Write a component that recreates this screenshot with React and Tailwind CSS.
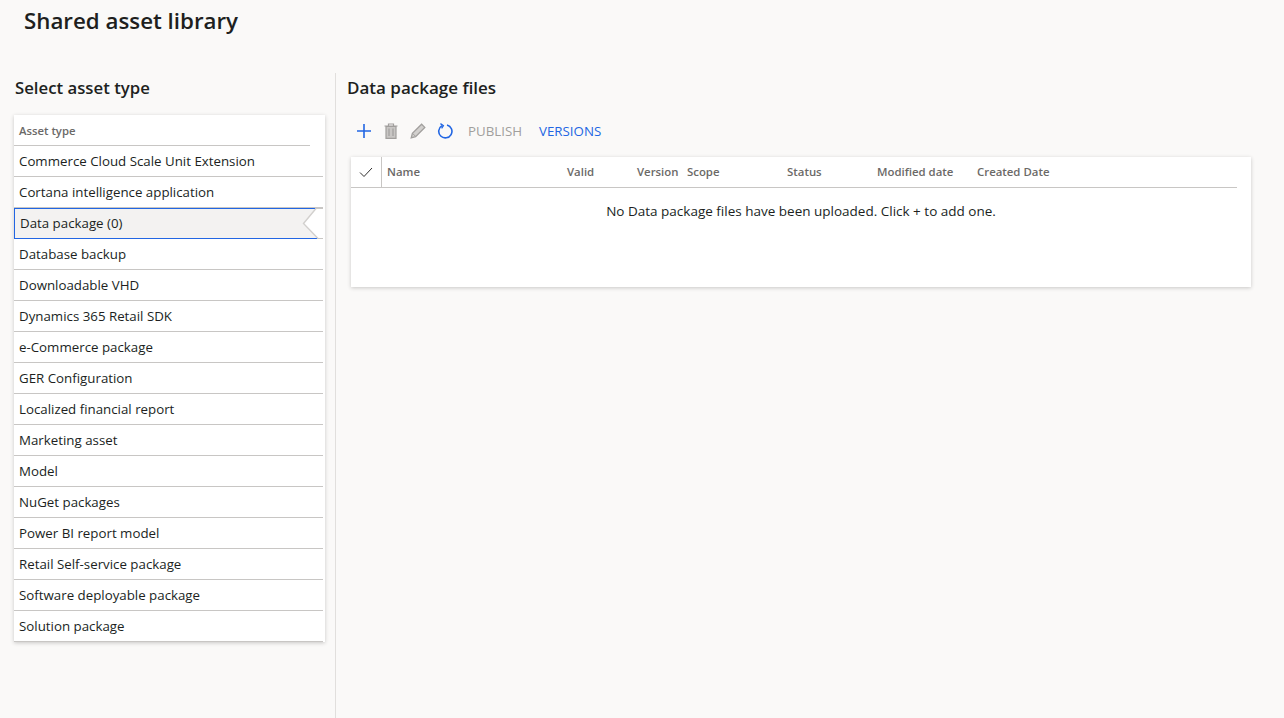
const ASSET_TYPES = [
  'Commerce Cloud Scale Unit Extension',
  'Cortana intelligence application',
  'Data package (0)',
  'Database backup',
  'Downloadable VHD',
  'Dynamics 365 Retail SDK',
  'e-Commerce package',
  'GER Configuration',
  'Localized financial report',
  'Marketing asset',
  'Model',
  'NuGet packages',
  'Power BI report model',
  'Retail Self-service package',
  'Software deployable package',
  'Solution package',
]

const COLUMNS = [
  { label: 'Name', width: 'w-[180px]' },
  { label: 'Valid', width: 'w-[70px]' },
  { label: 'Version', width: 'w-[50px]' },
  { label: 'Scope', width: 'w-[100px]' },
  { label: 'Status', width: 'w-[90px]' },
  { label: 'Modified date', width: 'w-[100px]' },
  { label: 'Created Date', width: 'w-[100px]' },
]

function AssetRow({ label, selected }) {
  if (selected) {
    return (
      <div className="relative w-[309px] h-[31px] flex items-center pl-[5px] bg-[#f3f2f1] border border-[#2266e3] border-r-0 text-[13.3px] text-[#201f1e]">
        {label}
        {/* notch pointing at the details pane */}
        <svg className="absolute right-0 top-[-1px]" width="21" height="31" viewBox="0 0 21 31">
          <path d="M14 0 H21 V31 H16 L1.5 15.5 Z" fill="#ffffff" />
          <path d="M14 0.5 H21 M16 30.5 H21" fill="none" stroke="#c8c6c4" />
          <path d="M14 0.5 L1.5 15.5 L16 30.5" fill="none" stroke="#d2d0ce" strokeWidth="1.4" />
        </svg>
      </div>
    )
  }
  return (
    <div className="w-[309px] h-[31px] flex items-center pl-[5px] pt-[2px] border-b border-[#c8c6c4] text-[13.3px] text-[#201f1e]">
      {label}
    </div>
  )
}

function Toolbar() {
  return (
    <div className="flex items-center h-[30px] ml-[9px] mt-[14px]">
      <svg width="16" height="16" viewBox="0 0 16 16">
        <path d="M8 1v14M1 8h14" stroke="#2266e3" strokeWidth="1.6" fill="none" />
      </svg>
      <svg width="14" height="16" viewBox="0 0 14 16" className="ml-[12px]">
        <path d="M0.5 3h13M4.5 3V1h5v2" stroke="#a19f9d" strokeWidth="1.2" fill="none" />
        <path d="M2 3.5h10V15.3H2z" fill="#c8c6c4" stroke="#a19f9d" strokeWidth="1.2" />
        <path d="M5 5.5v7.5M9 5.5v7.5" stroke="#a19f9d" strokeWidth="1.2" />
      </svg>
      <svg width="16" height="16" viewBox="0 0 16 16" className="ml-[12px]">
        <path d="M1.2 14.8l1.2-4.4L11.6 1.2l3.2 3.2-9.2 9.2z" fill="#d2d0ce" stroke="#a19f9d" strokeWidth="1.3" />
        <path d="M2.8 10.6l2.6 2.6" stroke="#a19f9d" strokeWidth="1" />
      </svg>
      <svg width="16" height="16" viewBox="0 0 16 16" className="ml-[11px]">
        <path d="M5 2.6A6.6 6.6 0 1 0 10 1.9" fill="none" stroke="#2266e3" strokeWidth="1.6" />
        <path d="M3.4 0.6L6.4 2.6 4.6 5.4" fill="none" stroke="#2266e3" strokeWidth="1.3" />
      </svg>
      <span className="ml-[15px] pt-[2px] text-[13.3px] text-[#a19f9d]">PUBLISH</span>
      <span className="ml-[17px] pt-[2px] text-[13.3px] text-[#2266e3]">VERSIONS</span>
    </div>
  )
}

export default function App() {
  return (
    <div
      className="w-[1284px] h-[718px] overflow-hidden flex flex-col bg-[#faf9f8] text-[#201f1e]"
      style={{ fontFamily: '"Open Sans", "Noto Sans", sans-serif' }}
    >
      <h1 className="h-[73px] pl-[24px] pt-[5px] text-[22.3px] leading-[32px] font-semibold">Shared asset library</h1>

      <div className="flex flex-1 min-h-0">
        {/* Asset type column */}
        <div className="w-[336px] shrink-0 pl-[14px] border-r border-[#e1dfdd]">
          <h2 className="h-[42px] pl-px pt-[2px] text-[16.75px] leading-[26px] font-semibold">Select asset type</h2>
          <div className="w-[311px] bg-white shadow-[0_1px_4px_rgba(0,0,0,0.2)]">
            <div className="h-[31px] w-[296px] flex items-center pl-[5px] pt-[2px] border-b border-[#c8c6c4] text-[11.3px] font-semibold text-[#6b6967]">
              Asset type
            </div>
            {ASSET_TYPES.map((label) => (
              <AssetRow key={label} label={label} selected={label === 'Data package (0)'} />
            ))}
          </div>
        </div>

        {/* Files pane */}
        <div className="flex-1 pl-[11px]">
          <h2 className="h-[29px] text-[17px] leading-[30px] font-semibold">Data package files</h2>
          <Toolbar />
          <div className="ml-[4px] mt-[11px] w-[900px] h-[130px] bg-white shadow-[0_1px_4px_rgba(0,0,0,0.2)]">
            <div className="w-[886px] h-[31px] flex items-center border-b border-[#c8c6c4] text-[11.4px] font-semibold text-[#6b6967]">
              <div className="w-[31px] h-full flex items-center justify-center border-r border-[#c8c6c4]">
                <svg width="14" height="14" viewBox="0 0 14 14">
                  <path d="M1 7.5l4 4L13 3" fill="none" stroke="#323130" strokeWidth="1" />
                </svg>
              </div>
              <div className="flex pl-[5px]">
                {COLUMNS.map((col) => (
                  <div key={col.label} className={col.width}>{col.label}</div>
                ))}
              </div>
            </div>
            <div className="pt-[11px] text-center text-[13.5px] leading-[24px]">
              No Data package files have been uploaded. Click + to add one.
            </div>
          </div>
        </div>
      </div>
    </div>
  )
}
